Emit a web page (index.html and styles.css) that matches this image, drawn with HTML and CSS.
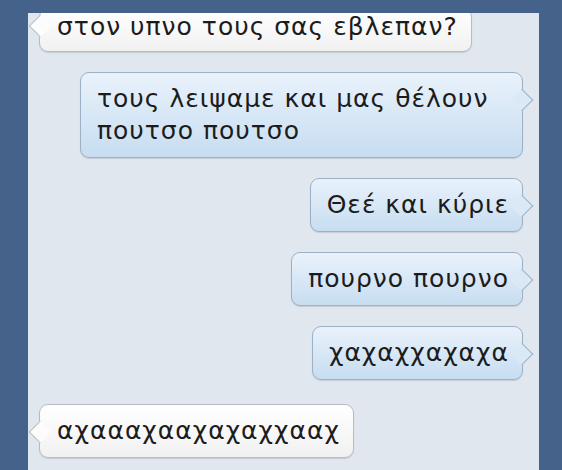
FILE: index.html
```html
<!DOCTYPE html>
<html lang="el">
<head>
    <meta charset="UTF-8">
    <meta name="viewport" content="width=device-width, initial-scale=1.0">
    <title>Μηνύματα</title>
    <link rel="stylesheet" href="styles.css">
</head>
<body>
    <div class="chat">
        <div class="thread">
            <div class="msg in first">στον υπνο τους σας εβλεπαν?</div>
            <div class="msg out wide">τους λειψαμε και μας θέλουν πουτσο πουτσο</div>
            <div class="msg out">Θεέ και κύριε</div>
            <div class="msg out">πουρνο πουρνο</div>
            <div class="msg out">χαχαχχαχαχα</div>
            <div class="msg in">αχαααχααχαχαχχααχ</div>
        </div>
    </div>
</body>
</html>
```

FILE: styles.css
```css
body {
    margin: 0;
    height: 470px;
    background: #45628b;
    font-family: "DejaVu Sans", Verdana, sans-serif;
    overflow: hidden;
}

.chat {
    margin: 13px 23px 0 28px;
    height: 457px;
    background: #e1e7ef;
    overflow: hidden;
}

.thread {
    display: flex;
    flex-direction: column;
    gap: 20px;
    padding: 0 16px 0 11px;
    margin-top: -5px;
}

.msg {
    position: relative;
    max-width: 412px;
    font-size: 25px;
    letter-spacing: 1px;
    line-height: 32px;
    color: #1c1c1c;
    padding: 10px 13px 10px 16px;
    border-radius: 9px;
    box-shadow: 0 1px 1px rgba(0, 0, 0, 0.12);
}

.msg::before {
    content: "";
    position: absolute;
    top: 19px;
    width: 15px;
    height: 15px;
    transform: rotate(45deg);
}

.out {
    align-self: flex-end;
    background: linear-gradient(180deg, #e9f2fb, #c7ddf1);
    border: 1px solid #9cb0c6;
}

.wide {
    width: 412px;
}

.out::before {
    right: -8px;
    background: #dbe9f6;
    border-top: 1px solid #9cb0c6;
    border-right: 1px solid #9cb0c6;
}

.in {
    align-self: flex-start;
    background: linear-gradient(180deg, #ffffff, #f1f1f1);
    border: 1px solid #b7bcc3;
    margin-top: 4px;
    padding-left: 17px;
}

.in::before {
    left: -8px;
    background: #fcfcfc;
    border-bottom: 1px solid #b7bcc3;
    border-left: 1px solid #b7bcc3;
}

/* the top message is partly scrolled out of view */
.first {
    margin-top: 0;
    padding-top: 4px;
    line-height: 28px;
}

.first::before {
    top: 9px;
}
```
